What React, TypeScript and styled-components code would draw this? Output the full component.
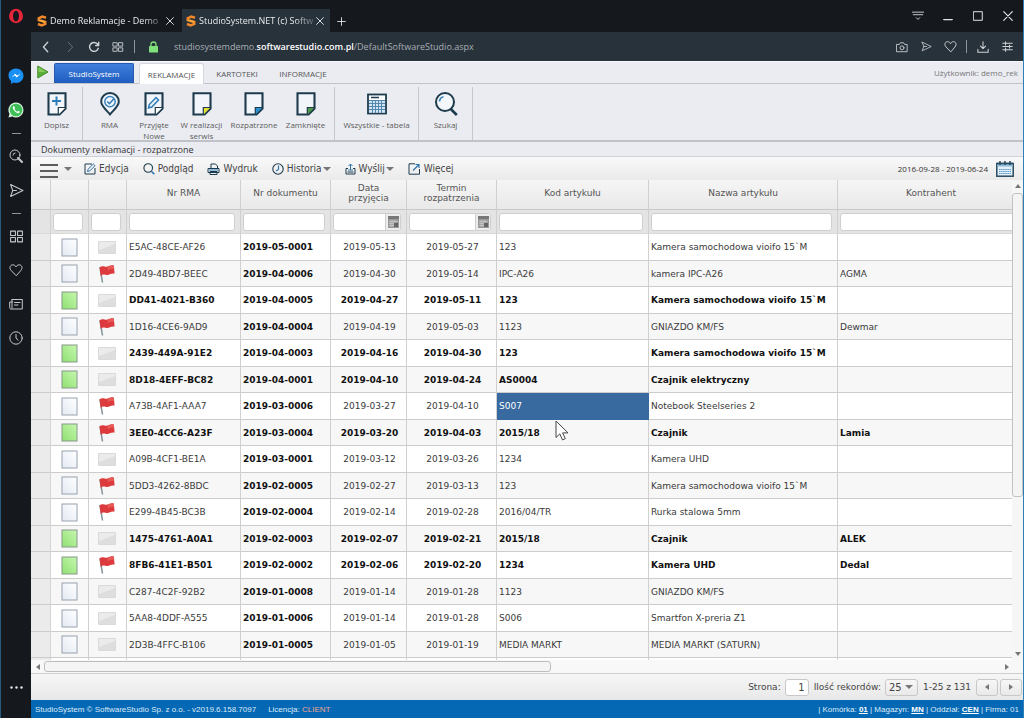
import React from "react";
import styled, { createGlobalStyle, css } from "styled-components";

const ui = `"Open Sans", "Noto Sans", sans-serif`;
const grid = `"DejaVu Sans", Verdana, sans-serif`;

const GlobalStyle = createGlobalStyle`
  *, *::before, *::after { box-sizing: border-box; }
  body { margin: 0; font-family: ${ui}; font-size: 9px; color: #444; background: #16191e; }
  button, input, select { font: inherit; color: inherit; margin: 0; padding: 0; }
  button { border: 0; background: none; cursor: pointer; }
  svg { display: block; flex: none; }
`;

const Window = styled.div`
  display: flex;
  height: 100vh;
  overflow: hidden;
  border-left: 1px solid #24587c;
  border-right: 1px solid #2f7fb8;
`;

const Sidebar = styled.nav`
  width: 30px;
  flex: none;
  display: flex;
  flex-direction: column;
  align-items: center;
  background: #15191e;
  color: #c6c9cc;
  padding-bottom: 21px;
`;

const SideButton = styled.button<{ $height?: number }>`
  width: 30px;
  height: ${(p) => p.$height ?? 34}px;
  display: grid;
  place-items: center;
`;

const SideGap = styled.div`
  height: 28px;
`;

const SideRule = styled.div`
  width: 9px;
  height: 1px;
  margin: 6px 0 5px;
  background: #92969a;
`;

const SideSpacer = styled.div`
  flex: 1;
`;

const Main = styled.div`
  flex: 1;
  min-width: 0;
  display: flex;
  flex-direction: column;
  background: #fff;
`;

const TabStrip = styled.header`
  height: 32px;
  flex: none;
  display: flex;
  align-items: flex-end;
  background: #15191e;
  color: #e2e4e6;
`;

const BrowserTab = styled.div<{ $active?: boolean }>`
  width: ${(p) => (p.$active ? 148 : 151)}px;
  height: 23px;
  display: flex;
  align-items: center;
  gap: 3px;
  padding: 0 6px 0 ${(p) => (p.$active ? 4 : 6)}px;
  background: ${(p) => (p.$active ? "#28323b" : "transparent")};
  color: #e8eaec;
`;

const TabTitle = styled.span`
  flex: 1;
  min-width: 0;
  overflow: hidden;
  white-space: nowrap;
  font-size: 9px;
  line-height: 16px;
  mask-image: linear-gradient(90deg, #000 84%, rgba(0, 0, 0, 0.3));
`;

const IconButton = styled.button<{ $width?: number }>`
  width: ${(p) => p.$width ?? 12}px;
  height: 22px;
  flex: none;
  display: grid;
  place-items: center;
`;

const WindowControls = styled.div`
  margin-left: auto;
  align-self: stretch;
  display: flex;
  align-items: center;
`;

const AddressBar = styled.div`
  height: 29px;
  flex: none;
  display: flex;
  align-items: center;
  padding: 0 4px 0 3px;
  background: #28323b;
  color: #d0d4d7;
`;

const BarRule = styled.span<{ $gap: number }>`
  width: 1px;
  height: 13px;
  margin: 0 ${(p) => p.$gap}px;
  background: #8d949a;
`;

const Url = styled.div`
  flex: 1;
  margin-left: 7px;
  color: #a9afb4;
  white-space: nowrap;
  b { color: #fff; font-weight: 600; }
`;

const NavRow = styled.nav`
  height: 23px;
  flex: none;
  display: flex;
  align-items: flex-end;
  padding: 0 5px 0 6px;
  background: #eaecf1;
  border-top: 1px solid #f8f9fb;
  border-bottom: 1px solid #c2c4ca;
  font-size: 8px;
`;

const PlayMark = styled.span`
  width: 17px;
  height: 18px;
`;

const HomeTab = styled.button`
  width: 80px;
  height: 20px;
  margin-right: 5px;
  color: #fff;
  background: linear-gradient(#3f7fdc, #1f5cbf);
  border: 1px solid #2459ad;
  border-bottom: 0;
  border-radius: 2px 2px 0 0;
`;

const NavTab = styled.button<{ $active?: boolean; $width: number }>`
  width: ${(p) => p.$width}px;
  height: 20px;
  color: #555;
  ${(p) =>
    p.$active &&
    css`
      height: 21px;
      margin-bottom: -1px;
      background: #fff;
      border: 1px solid #d4d7dd;
      border-bottom: 0;
      border-radius: 3px 3px 0 0;
    `}
`;

const UserName = styled.span`
  margin-left: auto;
  line-height: 20px;
  color: #777;
`;

const Ribbon = styled.div`
  height: 58px;
  flex: none;
  display: flex;
  padding-top: 3px;
  background: #eaecf1;
  border-bottom: 2px solid #bfc2c9;
`;

const RibbonGroup = styled.div<{ $pad?: number }>`
  display: flex;
  align-items: flex-start;
  padding: 0 ${(p) => p.$pad ?? 0}px;
  border-right: 1px solid #c5c7cd;
`;

const RibbonButton = styled.button<{ $width: number }>`
  width: ${(p) => p.$width}px;
  height: 53px;
  padding-top: 5px;
  display: flex;
  flex-direction: column;
  align-items: center;
  gap: 3px;
  font-size: 8px;
  line-height: 11px;
  color: #5c5c5c;
  text-align: center;
`;

const RibbonLabel = styled.span<{ $wrap?: boolean }>`
  white-space: ${(p) => (p.$wrap ? "pre-line" : "nowrap")};
`;

const Heading = styled.h1`
  height: 15px;
  flex: none;
  margin: 0;
  padding: 0 10px;
  font-size: 9px;
  font-weight: 400;
  line-height: 15px;
  color: #333;
  background: #eaecf1;
  border-bottom: 1px solid #cfd1d6;
`;

const Toolbar = styled.div`
  height: 23px;
  flex: none;
  display: flex;
  align-items: center;
  padding: 0 9px;
  gap: 14px;
  background: linear-gradient(#f9f9f9, #eaeaea);
  font-family: "DejaVu Sans Condensed", "DejaVu Sans", Tahoma, sans-serif;
  font-size: 10px;
`;

const MenuButton = styled.button`
  display: flex;
  align-items: center;
  gap: 6px;
  margin-right: -2px;
`;

const Bars = styled.span`
  width: 18px;
  height: 14px;
  margin-top: 5px;
  border-top: 2px solid #5c5c5c;
  border-bottom: 2px solid #5c5c5c;
  display: flex;
  align-items: center;
  &::before { content: ""; width: 100%; height: 2px; background: #5c5c5c; }
`;

const Caret = styled.span`
  border: 4px solid transparent;
  border-top-color: #777;
  border-bottom: 0;
`;

const ToolButton = styled.button`
  display: flex;
  align-items: center;
  gap: 3px;
  color: #444;
  ${Caret} { margin-left: -2px; }
`;

const DateRange = styled.button`
  display: flex;
  align-items: center;
  gap: 8px;
  margin-left: auto;
  font-family: ${ui};
  font-size: 8px;
  color: #333;
`;

const GridArea = styled.section`
  flex: 1;
  min-height: 0;
  display: flex;
  background: #f6f6f6;
`;

const GridView = styled.div`
  flex: 1;
  min-width: 0;
  overflow: hidden;
  background: #fff;
`;

const Table = styled.table`
  width: calc(100% + 13px);
  table-layout: fixed;
  border-collapse: separate;
  border-spacing: 0;
  font-family: ${grid};
  font-size: 9px;
  line-height: 10px;
`;

const HeadCell = styled.th`
  height: 30px;
  padding: 0 8px 3px;
  font-weight: 400;
  color: #555;
  text-align: center;
  vertical-align: middle;
  background: linear-gradient(#f5f5f5, #e9e9e9);
  border-right: 1px solid #d0d0d0;
  border-bottom: 1px solid #c9c9c9;
`;

const FilterCell = styled.td`
  height: 24px;
  padding: 0 5px 0 2px;
  background: #e4e4e4;
  border-right: 1px solid #d0d0d0;
  border-bottom: 1px solid #d9d9d9;
`;

const FilterBox = styled.div`
  height: 18px;
  display: flex;
  align-items: center;
  background: #fff;
  border: 1px solid #cfcfcf;
  border-radius: 3px;
  overflow: hidden;
`;

const FilterInput = styled.input`
  flex: 1;
  min-width: 0;
  height: 16px;
  border: 0;
  background: transparent;
  outline: 0;
`;

const CalendarButton = styled.button`
  width: 15px;
  height: 16px;
  display: grid;
  place-items: center;
  background: #ececec;
  border-left: 1px solid #cfcfcf;
`;

const Row = styled.tr<{ $strong: boolean }>`
  height: 27px;
  color: ${(p) => (p.$strong ? "#111" : "#3a3a3a")};
  font-weight: ${(p) => (p.$strong ? 700 : 400)};
  background: #fff;
  &:nth-child(even) { height: 26px; background: #f7f7f7; }
`;

const Cell = styled.td<{ $align?: string; $bold?: boolean; $selected?: boolean }>`
  position: relative;
  padding: 0 0 0 2px;
  text-align: ${(p) => p.$align ?? "left"};
  white-space: nowrap;
  border-right: 1px solid #d0d0d0;
  border-bottom: 1px solid #cccccc;
  ${(p) => p.$bold && css`font-weight: 700; color: #111;`}
  ${(p) =>
    p.$selected &&
    css`
      background: #38699f;
      border-color: #38699f;
      color: #fff;
    `}
`;

const PictureCell = styled(Cell)`
  padding: 0 1px 0 0;
  > svg { margin: 0 auto; }
`;

const RowHandle = styled.td`
  background: #ebebeb;
  border-right: 1px solid #d4d4d4;
  border-bottom: 1px solid #cccccc;
`;

const Pointer = styled.span`
  position: absolute;
  left: 58px;
  top: 27px;
  z-index: 1;
`;

const VScroll = styled.div`
  width: 11px;
  flex: none;
  display: flex;
  flex-direction: column;
  align-items: center;
  padding: 4px 0;
  gap: 5px;
  background: #f6f6f6;
`;

const Arrow = styled.span<{ $dir: "up" | "down" | "left" | "right" }>`
  width: 0;
  height: 0;
  flex: none;
  border: 3px solid transparent;
  border-${(p) => ({ up: "bottom", down: "top", left: "right", right: "left" })[p.$dir]}: 4px solid #777;
  border-${(p) => ({ up: "top", down: "bottom", left: "left", right: "right" })[p.$dir]}: 0;
`;

const VTrack = styled.div`
  flex: 1;
  width: 11px;
`;

const VThumb = styled.div`
  height: 67%;
  border: 1px solid #c2c2c2;
  border-radius: 3px;
  background: #f4f4f4;
`;

const HScroll = styled.div`
  height: 14px;
  flex: none;
  display: flex;
  align-items: center;
  gap: 4px;
  padding: 0 14px 0 5px;
  background: #f8f8f8;
  border-bottom: 1px solid #cfcfcf;
`;

const HTrack = styled.div`
  flex: 1;
`;

const HThumb = styled.div`
  width: 53%;
  height: 11px;
  border: 1px solid #bdbdbd;
  border-radius: 3px;
  background: #f4f4f4;
`;

const Pager = styled.div`
  height: 26px;
  flex: none;
  display: flex;
  align-items: center;
  justify-content: flex-end;
  gap: 5px;
  padding-right: 1px;
  background: linear-gradient(#f6f6f6, #e8e8e8);
  font-family: ${grid};
`;

const PagerLabel = styled.label`
  display: flex;
  align-items: center;
  gap: 4px;
`;

const PageInput = styled.input`
  width: 24px;
  height: 17px;
  padding-right: 3px;
  font-size: 10px;
  text-align: right;
  background: #fff;
  border: 1px solid #c8c8c8;
  border-radius: 3px;
`;

const SelectWrap = styled.span`
  display: grid;
  align-items: center;
  > * { grid-area: 1 / 1; }
  ${Caret} { justify-self: end; margin-right: 5px; pointer-events: none; }
`;

const PageSelect = styled.select`
  appearance: none;
  width: 33px;
  height: 17px;
  padding-left: 3px;
  font-size: 10px;
  background: linear-gradient(#f7f7f7, #e9e9e9);
  border: 1px solid #c8c8c8;
  border-radius: 3px;
`;

const PagerButton = styled.button`
  width: 22px;
  height: 17px;
  margin-right: -3px;
  display: grid;
  place-items: center;
  background: linear-gradient(#f7f7f7, #e9e9e9);
  border: 1px solid #c8c8c8;
  border-radius: 3px;
  &:last-child { margin-right: 0; }
`;

const StatusBar = styled.footer`
  height: 18px;
  flex: none;
  display: flex;
  align-items: center;
  padding: 0 4px;
  gap: 12px;
  background: #0468b5;
  color: #dcebf7;
  font-family: "Liberation Sans", Arial, sans-serif;
  font-size: 8px;
  a { color: #fff; font-weight: 700; }
  em { font-style: normal; color: #f2a58c; }
`;

const StatusRight = styled.span`
  margin-left: auto;
`;

const Stroke = ({ size = 14, width = 1, children }: { size?: number; width?: number; children: React.ReactNode }) => (
  <svg width={size} height={size} viewBox="0 0 14 14" fill="none" stroke="currentColor" strokeWidth={width} strokeLinejoin="round" strokeLinecap="round">
    {children}
  </svg>
);

const HEART = "M7 12.5 2 7.3C-.2 4.6 1.4 1.8 3.8 1.8 5.4 1.8 6.4 2.8 7 4 7.6 2.8 8.6 1.8 10.2 1.8c2.4 0 4 2.8 1.8 5.5z";

const HeartIcon = ({ size }: { size?: number }) => <Stroke size={size}><path d={HEART} /></Stroke>;
const SendIcon = ({ size }: { size?: number }) => <Stroke size={size}><path d="M1.5 1.5 13 7 1.5 12.5 3.5 7zM3.5 7H7" /></Stroke>;
const SquaresIcon = ({ size }: { size?: number }) => (
  <Stroke size={size}>
    <rect x="1.5" y="2" width="4.5" height="4" /><rect x="8" y="2" width="4.5" height="4" />
    <rect x="1.5" y="8" width="4.5" height="4" /><rect x="8" y="8" width="4.5" height="4" />
  </Stroke>
);
const CloseIcon = ({ size = 8 }: { size?: number }) => <Stroke size={size} width={1.6}><path d="m1 1 12 12M13 1 1 13" /></Stroke>;

const StudioLogo = () => (
  <svg width="10" height="12" viewBox="0 0 10 12" fill="none" stroke="#f0872a" strokeWidth="2.6" strokeLinejoin="miter">
    <path d="M9 2.8 5.2 1.6 1.8 3.2v1.9L8.2 7v2L4.8 10.4 1 9" />
    <path d="M1.8 5.1 8.2 7" stroke="#f7b23b" strokeWidth="1.4" />
  </svg>
);

const NAVY = "#1d3b4d";

const Sheet = ({ fold = "#fff", children }: { fold?: string; children?: React.ReactNode }) => (
  <svg width="20" height="24" viewBox="0 0 20 24" fill="none">
    <path d="M1.500 1.200h17v15.300l-6 6H1.500z" fill="#f2f6fa" stroke={NAVY} strokeWidth="2.100" />
    <path d="M11.300 22.400v-6.900h7.200v1l-6 6z" fill={fold} stroke={NAVY} strokeWidth="1.200" />
    {children}
  </svg>
);

const PinIcon = () => (
  <svg width="20" height="24" viewBox="0 0 20 24" fill="none">
    <path d="M10 22.4C6.5 18 1.2 14.2 1.2 9.5a8.800 8.500 0 0 1 17.600 0C18.800 14.200 13.500 18 10 22.400z" stroke={NAVY} strokeWidth="2" fill="#f2f6fa" />
    <circle cx="10" cy="9.600" r="5.200" stroke="#3a84bf" strokeWidth="1.500" />
    <path d="m7.300 9.400 2.200 2.300 4.300-5" stroke="#2e78b4" strokeWidth="1.500" />
  </svg>
);

const TableIcon = () => (
  <svg width="20" height="24" viewBox="0 0 20 24" fill="none">
    <rect x="1" y="2.500" width="18" height="19" fill="#fff" stroke={NAVY} strokeWidth="1.800" />
    <path d="M4 5.500h8" stroke={NAVY} strokeWidth="1.500" />
    <path d="M2 8.500h16v12H2z" fill="#cfe4f4" />
    <path d="M2 8.500h16M2 11.500h16M2 14.500h16M2 17.500h16M5.500 8v13M8.500 8v13M11.500 8v13M14.500 8v13" stroke="#5586ab" strokeWidth="1" />
  </svg>
);

const SearchIcon = () => (
  <svg width="24" height="24" viewBox="0 0 24 24" fill="none" stroke={NAVY}>
    <circle cx="11" cy="10" r="9" strokeWidth="2" fill="#f5f8fb" />
    <path d="m16.800 17 6 6" strokeWidth="2.600" />
    <path d="M5.500 9.500c.2-2.500 1.600-4.300 4-4.800" stroke="#2f80be" strokeWidth="1.600" />
  </svg>
);

const PagePicture = ({ green }: { green: boolean }) => (
  <svg width="17" height="19" viewBox="0 0 17 19">
    <defs>
      <linearGradient id={green ? "pg" : "pw"} x1="0" y1="1" x2="1" y2="0">
        <stop offset="0" stopColor={green ? "#8fe071" : "#e3e9f3"} />
        <stop offset="1" stopColor={green ? "#c6f7b0" : "#ffffff"} />
      </linearGradient>
    </defs>
    <rect x="1" y="1" width="15" height="17" fill={`url(#${green ? "pg" : "pw"})`} stroke={green ? "#86988a" : "#98a2b0"} />
  </svg>
);

const FlagPicture = ({ red }: { red: boolean }) =>
  red ? (
    <svg width="18" height="20" viewBox="0 0 18 20">
      <path d="M2 3.500 4.500 18.500" stroke="#7f9097" strokeWidth="1.500" />
      <path d="M1.500 3.200c1.600-1.200 3.400-1.200 5-.8 2 .5 3.200.3 4.800-.5 1.500-.7 3-.7 4.500-.3l.8 8c-1.800-.5-3.200-.1-4.700.7-1.600.8-3 .7-4.600.4-1.700-.3-3.200-.1-4.600 1.300z" fill="#dc3a3c" />
      <path d="M9.500 2.500c2-1 3.800-1.400 6.300-.9l.4 3.400c-2.300-.4-4.300 0-6.300 1.200z" fill="#e85a58" />
    </svg>
  ) : (
    <svg width="18" height="13" viewBox="0 0 18 13">
      <path d="M.5.500h17v12H.5z" fill="#ebebeb" stroke="#dadada" />
      <path d="m1 9 16-6v9H1z" fill="#dedede" />
    </svg>
  );

const MiniCalendar = () => (
  <svg width="11" height="12" viewBox="0 0 11 12">
    <path d="M0 0h11v12H0z" fill="#999" />
    <path d="M0 0h11v3H0z" fill="#777" />
    <path d="M1 5.500h9M1 7.500h9M1 9.500h9M3 4v7M5 4v7M7 4v7" stroke="#d4d4d4" strokeWidth=".6" />
    <path d="M6 7h4v4H6z" fill="#666" />
  </svg>
);

const BLUE = "#2f74ab";

const tools: { label: string; menu?: boolean; icon: React.ReactNode }[] = [
  { label: "Edycja", icon: (
    <svg width="12" height="12" viewBox="0 0 12 12" fill="none"><path d="M8 1H1v10h10V5" stroke={NAVY} /><path d="m3.500 8.500.6-2.300L9.300 1l1.700 1.700-5.200 5.200z" stroke={BLUE} /></svg>) },
  { label: "Podgląd", icon: (
    <svg width="12" height="12" viewBox="0 0 12 12" fill="none"><circle cx="5.200" cy="5" r="4.300" stroke={NAVY} strokeWidth="1.100" /><path d="m8.300 8.300 3 3" stroke={BLUE} strokeWidth="1.600" /></svg>) },
  { label: "Wydruk", icon: (
    <svg width="13" height="12" viewBox="0 0 13 12" fill="none"><path d="M4 5V1h4.500L10.500 3v2M1 5.500h11v4H1zM3 8.500h7v3H3z" stroke={NAVY} /><path d="M2 7h9" stroke="#6fa6cf" strokeWidth="1.500" /></svg>) },
  { label: "Historia", menu: true, icon: (
    <svg width="12" height="12" viewBox="0 0 12 12" fill="none"><circle cx="6" cy="6" r="5.200" stroke={NAVY} strokeWidth="1.100" /><path d="M6.500 2.500v4L4 8" stroke={BLUE} strokeWidth="1.200" /></svg>) },
  { label: "Wyślij", menu: true, icon: (
    <svg width="11" height="12" viewBox="0 0 11 12" fill="none"><path d="M3 5.500H1v5.500h9V5.500H8M2.500 9h6" stroke={NAVY} /><path d="M5.500 7V1M3.500 3l2-2 2 2M3 7h5" stroke={BLUE} /></svg>) },
  { label: "Więcej", icon: (
    <svg width="13" height="12" viewBox="0 0 13 12" fill="none"><path d="M7 .8H1v10.400h10.500V6" stroke={NAVY} /><path d="m5 7.500 5.500-5.500M7.500 1.500h3.500V5" stroke={BLUE} strokeWidth="1.200" /></svg>) },
];

const columns: { label: string; width?: number; filter?: "text" | "date" }[] = [
  { label: "", width: 20 },
  { label: "", width: 38, filter: "text" },
  { label: "", width: 38, filter: "text" },
  { label: "Nr RMA", width: 114, filter: "text" },
  { label: "Nr dokumentu", width: 90, filter: "text" },
  { label: "Data przyjęcia", width: 76, filter: "date" },
  { label: "Termin rozpatrzenia", width: 90, filter: "date" },
  { label: "Kod artykułu", width: 152, filter: "text" },
  { label: "Nazwa artykułu", width: 189, filter: "text" },
  { label: "Kontrahent", filter: "text" },
];

// green page, red flag, RMA number, document, received, due, item code, item name, contractor
type Claim = [boolean, boolean, string, string, string, string, string, string, string];

const claims: Claim[] = [
  [false, false, "E5AC-48CE-AF26", "2019-05-0001", "2019-05-13", "2019-05-27", "123", "Kamera samochodowa vioifo 15`M", ""],
  [false, true, "2D49-4BD7-BEEC", "2019-04-0006", "2019-04-30", "2019-05-14", "IPC-A26", "kamera IPC-A26", "AGMA"],
  [true, false, "DD41-4021-B360", "2019-04-0005", "2019-04-27", "2019-05-11", "123", "Kamera samochodowa vioifo 15`M", ""],
  [false, true, "1D16-4CE6-9AD9", "2019-04-0004", "2019-04-19", "2019-05-03", "1123", "GNIAZDO KM/FS", "Dewmar"],
  [true, false, "2439-449A-91E2", "2019-04-0003", "2019-04-16", "2019-04-30", "123", "Kamera samochodowa vioifo 15`M", ""],
  [true, false, "8D18-4EFF-BC82", "2019-04-0001", "2019-04-10", "2019-04-24", "AS0004", "Czajnik elektryczny", ""],
  [false, true, "A73B-4AF1-AAA7", "2019-03-0006", "2019-03-27", "2019-04-10", "S007", "Notebook Steelseries 2", ""],
  [true, true, "3EE0-4CC6-A23F", "2019-03-0004", "2019-03-20", "2019-04-03", "2015/18", "Czajnik", "Lamia"],
  [false, false, "A09B-4CF1-BE1A", "2019-03-0001", "2019-03-12", "2019-03-26", "1234", "Kamera UHD", ""],
  [false, true, "5DD3-4262-8BDC", "2019-02-0005", "2019-02-27", "2019-03-13", "123", "Kamera samochodowa vioifo 15`M", ""],
  [false, true, "E299-4B45-BC3B", "2019-02-0004", "2019-02-14", "2019-02-28", "2016/04/TR", "Rurka stalowa 5mm", ""],
  [true, false, "1475-4761-A0A1", "2019-02-0003", "2019-02-07", "2019-02-21", "2015/18", "Czajnik", "ALEK"],
  [true, true, "8FB6-41E1-B501", "2019-02-0002", "2019-02-06", "2019-02-20", "1234", "Kamera UHD", "Dedal"],
  [false, false, "C287-4C2F-92B2", "2019-01-0008", "2019-01-14", "2019-01-28", "1123", "GNIAZDO KM/FS", ""],
  [false, false, "5AA8-4DDF-A555", "2019-01-0006", "2019-01-14", "2019-01-28", "S006", "Smartfon X-preria Z1", ""],
  [false, false, "2D3B-4FFC-B106", "2019-01-0005", "2019-01-05", "2019-01-19", "MEDIA MARKT", "MEDIA MARKT (SATURN)", ""],
];

const SELECTED_CODE = "S007";

const BrowserSidebar = () => (
  <Sidebar aria-label="Opera">
    <SideButton $height={31} aria-label="Menu">
      <svg width="16" height="16" viewBox="0 0 16 16"><path fillRule="evenodd" d="M8 .8a7 7.200 0 1 1 0 14.400A7 7.200 0 0 1 8 .8zm0 1.900c-1.900 0-3 2.300-3 5.300s1.100 5.300 3 5.300 3-2.300 3-5.300-1.100-5.300-3-5.300z" fill="#e8243a" /></svg>
    </SideButton>
    <SideGap />
    <SideButton aria-label="Messenger">
      <svg width="16" height="16" viewBox="0 0 16 16"><path d="M8 .5C3.700.500.500 3.600.500 7.500c0 2.200 1 4.100 2.600 5.400V16l2.500-1.400c.8.200 1.600.3 2.400.3 4.300 0 7.500-3.200 7.500-7.200S12.300.500 8 .500z" fill="#1a90f5" /><path d="m3.500 9.500 3.700-3.800 1.900 1.900 3.400-1.900-3.700 3.900-1.900-2z" fill="#fff" /></svg>
    </SideButton>
    <SideButton aria-label="WhatsApp">
      <svg width="16" height="16" viewBox="0 0 16 16"><path d="M8 .5a7.500 7.500 0 0 1 0 15c-1.300 0-2.600-.3-3.600-.9L.500 15.500l1-3.700A7.500 7.500 0 0 1 8 .500z" fill="#d9f3dc" /><circle cx="8" cy="8" r="6.300" fill="#3fbf57" /><path d="M5.500 4.300c-1 .6-1 2 .2 3.700 1.600 2.400 3.900 3.700 5.300 3 .8-.4 1-1.300.7-1.500l-1.600-.8-.9 1c-1.200-.5-2.200-1.400-2.800-2.600l.7-.9-.7-1.700z" fill="#fff" /></svg>
    </SideButton>
    <SideRule />
    <SideButton aria-label="Szukaj">
      <Stroke><circle cx="6" cy="6" r="5" /><path d="M4 6a2 2 0 0 1 2-2" /><path d="m9 9 4 4" strokeWidth="2" /></Stroke>
    </SideButton>
    <SideButton aria-label="Flow"><SendIcon size={15} /></SideButton>
    <SideRule />
    <SideButton aria-label="Szybki dostęp"><SquaresIcon size={15} /></SideButton>
    <SideButton aria-label="Ulubione"><HeartIcon size={14} /></SideButton>
    <SideButton aria-label="Wiadomości">
      <Stroke><path d="M3 2.500h10.300v9.500H2C1 12 .7 11.500.7 10.500V5H3zM3 5v6M5.500 5.500h5.500M5.500 8h3.500" /></Stroke>
    </SideButton>
    <SideButton aria-label="Historia"><Stroke><circle cx="7" cy="7" r="6.200" /><path d="M7 3.500V7l2 2.200" /></Stroke></SideButton>
    <SideSpacer />
    <SideButton $height={20} aria-label="Więcej">
      <svg width="13" height="3" viewBox="0 0 13 3" fill="#e6e6e6"><circle cx="1.500" cy="1.500" r="1.200" /><circle cx="6.500" cy="1.500" r="1.200" /><circle cx="11.500" cy="1.500" r="1.200" /></svg>
    </SideButton>
  </Sidebar>
);

const BrowserChrome = () => (
  <>
    <TabStrip>
      <BrowserTab><StudioLogo /><TabTitle>Demo Reklamacje - Demo</TabTitle><IconButton aria-label="Zamknij kartę"><CloseIcon /></IconButton></BrowserTab>
      <BrowserTab $active><StudioLogo /><TabTitle>StudioSystem.NET (c) Softw</TabTitle><IconButton $width={8} aria-label="Zamknij kartę"><CloseIcon /></IconButton></BrowserTab>
      <IconButton $width={22} aria-label="Nowa karta"><Stroke size={9} width={1.4}><path d="M7 1v12M1 7h12" /></Stroke></IconButton>
      <WindowControls>
        <IconButton $width={31} aria-label="Lista kart"><Stroke size={12}><path d="M.5 2.500h13M1.500 5.500h11M5 9l2 2 2-2" /></Stroke></IconButton>
        <IconButton $width={30} aria-label="Minimalizuj"><Stroke size={10} width={1.6}><path d="M1 12h12" /></Stroke></IconButton>
        <IconButton $width={30} aria-label="Maksymalizuj"><Stroke size={10} width={1.4}><path d="M1 1h12v12H1z" /></Stroke></IconButton>
        <IconButton $width={30} aria-label="Zamknij"><CloseIcon size={10} /></IconButton>
      </WindowControls>
    </TabStrip>
    <AddressBar>
      <IconButton $width={24} aria-label="Wstecz"><Stroke size={12} width={1.5}><path d="M9 1.500 4 7l5 5.500" /></Stroke></IconButton>
      <IconButton $width={24} aria-label="Dalej"><Stroke size={12}><path opacity=".45" d="m5 1.500 5 5.500-5 5.500" /></Stroke></IconButton>
      <IconButton $width={24} aria-label="Odśwież"><Stroke size={12} width={1.6}><path d="M12 8.500A5.200 5.200 0 1 1 10.800 3.300L12.300 5M12.500 1.500V5.200H9" /></Stroke></IconButton>
      <IconButton $width={24} aria-label="Szybki wybór"><SquaresIcon size={12} /></IconButton>
      <BarRule $gap={4} />
      <IconButton $width={28} aria-label="Bezpieczne połączenie">
        <svg width="9" height="12" viewBox="0 0 9 12"><path d="M2 5V3.500a2.500 2.500 0 0 1 5 0V5" fill="none" stroke="#7fe07c" strokeWidth="1.300" /><rect y="5" width="9" height="6.500" rx=".6" fill="#7fe07c" /></svg>
      </IconButton>
      <Url>studiosystemdemo.<b>softwarestudio.com.pl</b>/DefaultSoftwareStudio.aspx</Url>
      <IconButton $width={24} aria-label="Zrzut ekranu"><Stroke size={12}><path d="M1 4h3l1.200-2h3.600L10 4h3v8.500H1z" /><circle cx="7" cy="8" r="2.300" /></Stroke></IconButton>
      <IconButton $width={24} aria-label="Wyślij do Flow"><SendIcon size={11} /></IconButton>
      <IconButton $width={24} aria-label="Ulubione"><HeartIcon size={13} /></IconButton>
      <BarRule $gap={4} />
      <IconButton $width={24} aria-label="Pobrane"><Stroke size={12} width={1.2}><path d="M7 1v7.500M4 6l3 3 3-3M1 9.500v3.500h12V9.500" /></Stroke></IconButton>
      <IconButton $width={24} aria-label="Ustawienia"><Stroke size={11} width={1.3}><path d="M1 3h12M1 7h12M1 11h12M4.500 1v4M9.500 5v4M4.500 9v4" /></Stroke></IconButton>
    </AddressBar>
  </>
);

const AppRibbon = () => (
  <>
    <NavRow>
      <PlayMark>
        <svg width="12" height="14" viewBox="0 0 12 14"><path d="M.8 1 11 7 .8 13z" fill="#5cae3a" stroke="#3f8a26" /><path d="M1.500 2.300 9.300 7H1.500z" fill="#86c95f" /></svg>
      </PlayMark>
      <HomeTab>StudioSystem</HomeTab>
      <NavTab $active $width={65}>REKLAMACJE</NavTab>
      <NavTab $width={66}>KARTOTEKI</NavTab>
      <NavTab $width={66}>INFORMACJE</NavTab>
      <UserName>Użytkownik: demo_rek</UserName>
    </NavRow>
    <Ribbon>
      <RibbonGroup>
        <RibbonButton $width={51}><Sheet><path d="M9.500 4.500v9M5 9h9" stroke="#2f7cba" strokeWidth="2" /></Sheet><RibbonLabel>Dopisz</RibbonLabel></RibbonButton>
      </RibbonGroup>
      <RibbonGroup $pad={5}>
        <RibbonButton $width={43}><PinIcon /><RibbonLabel>RMA</RibbonLabel></RibbonButton>
        <RibbonButton $width={46}><Sheet><path d="m4.500 16 .8-3.500 6.700-7 2.500 2.500-6.700 7z" fill="#eaf3fa" stroke="#2f7cba" strokeWidth="1.500" /></Sheet><RibbonLabel $wrap>{"Przyjęte\nNowe"}</RibbonLabel></RibbonButton>
        <RibbonButton $width={49}><Sheet fold="#e6e038" /><RibbonLabel $wrap>{"W realizacji\nserwis"}</RibbonLabel></RibbonButton>
        <RibbonButton $width={56}><Sheet fold="#2c8fd0" /><RibbonLabel>Rozpatrzone</RibbonLabel></RibbonButton>
        <RibbonButton $width={47}><Sheet fold="#4f9a4a" /><RibbonLabel>Zamknięte</RibbonLabel></RibbonButton>
      </RibbonGroup>
      <RibbonGroup><RibbonButton $width={83}><TableIcon /><RibbonLabel>Wszystkie - tabela</RibbonLabel></RibbonButton></RibbonGroup>
      <RibbonGroup><RibbonButton $width={53}><SearchIcon /><RibbonLabel>Szukaj</RibbonLabel></RibbonButton></RibbonGroup>
    </Ribbon>
    <Heading>Dokumenty reklamacji - rozpatrzone</Heading>
    <Toolbar>
      <MenuButton aria-label="Menu"><Bars /><Caret /></MenuButton>
      {tools.map((t) => (
        <ToolButton key={t.label}>{t.icon}<span>{t.label}</span>{t.menu && <Caret />}</ToolButton>
      ))}
      <DateRange>
        <span>2016-09-28 - 2019-06-24</span>
        <svg width="18" height="16" viewBox="0 0 18 16">
          <rect x=".8" y="2.500" width="16.400" height="12.700" fill="#e4f0f9" stroke="#27495f" strokeWidth="1.500" />
          <path d="M1.500 3h15v2.500h-15z" fill="#8db8d8" /><path d="M1 2.500h16M4 0v4M9 0v4M14 0v4" stroke="#27495f" strokeWidth="1.500" />
          <path d="M3 8.500h12M3 10.500h12M3 12.500h12" stroke="#5d9bc8" strokeDasharray="1.500 .6" />
        </svg>
      </DateRange>
    </Toolbar>
  </>
);

const ClaimsGrid = () => (
  <GridArea>
    <GridView>
      <Table>
        <colgroup>{columns.map((c, i) => <col key={i} width={c.width} />)}</colgroup>
        <thead>
          <tr>{columns.map((c, i) => <HeadCell key={i} scope="col">{c.label}</HeadCell>)}</tr>
          <tr>
            {columns.map((c, i) => (
              <FilterCell key={i}>
                {c.filter && (
                  <FilterBox>
                    <FilterInput aria-label={`Filtr ${c.label || i}`} />
                    {c.filter === "date" && <CalendarButton aria-label="Wybierz datę"><MiniCalendar /></CalendarButton>}
                  </FilterBox>
                )}
              </FilterCell>
            ))}
          </tr>
        </thead>
        <tbody>
          {claims.map(([green, red, rma, doc, received, due, code, name, contractor]) => (
            <Row key={rma} $strong={green}>
              <RowHandle />
              <PictureCell><PagePicture green={green} /></PictureCell>
              <PictureCell><FlagPicture red={red} /></PictureCell>
              <Cell>{rma}</Cell>
              <Cell $bold>{doc}</Cell>
              <Cell $align="center">{received}</Cell>
              <Cell $align="center">{due}</Cell>
              <Cell $selected={code === SELECTED_CODE}>
                {code}
                {code === SELECTED_CODE && (
                  <Pointer>
                    <svg width="15" height="21" viewBox="0 0 15 21"><path d="M1 1v16.500l3.800-3.600 2.700 6 2.800-1.300-2.700-5.700h5.400z" fill="#fff" stroke="#444" /></svg>
                  </Pointer>
                )}
              </Cell>
              <Cell>{name}</Cell>
              <Cell>{contractor}</Cell>
            </Row>
          ))}
          <Row $strong={false}>
            <RowHandle />
            {columns.slice(1).map((_, i) => <Cell key={i} />)}
          </Row>
        </tbody>
      </Table>
    </GridView>
    <VScroll>
      <Arrow $dir="up" />
      <VTrack><VThumb /></VTrack>
      <Arrow $dir="down" />
    </VScroll>
  </GridArea>
);

const GridFooter = () => (
  <>
    <HScroll><Arrow $dir="left" /><HTrack><HThumb /></HTrack><Arrow $dir="right" /></HScroll>
    <Pager>
      <PagerLabel>Strona: <PageInput defaultValue="1" /></PagerLabel>
      <PagerLabel>
        Ilość rekordów:
        <SelectWrap><PageSelect defaultValue="25"><option>25</option><option>50</option></PageSelect><Caret /></SelectWrap>
      </PagerLabel>
      <span>1-25 z 131</span>
      <PagerButton aria-label="Poprzednia strona"><Arrow $dir="left" /></PagerButton>
      <PagerButton aria-label="Następna strona"><Arrow $dir="right" /></PagerButton>
    </Pager>
    <StatusBar>
      <span>StudioSystem © SoftwareStudio Sp. z o.o. - v2019.6.158.7097</span>
      <span>Licencja: <em>CLIENT</em></span>
      <StatusRight>| Komórka: <a href="#komorka">01</a> | Magazyn: <a href="#magazyn">MN</a> | Oddział: <a href="#oddzial">CEN</a> | Firma: 01</StatusRight>
    </StatusBar>
  </>
);

export default function App() {
  return (
    <>
      <GlobalStyle />
      <Window>
        <BrowserSidebar />
        <Main>
          <BrowserChrome />
          <AppRibbon />
          <ClaimsGrid />
          <GridFooter />
        </Main>
      </Window>
    </>
  );
}
